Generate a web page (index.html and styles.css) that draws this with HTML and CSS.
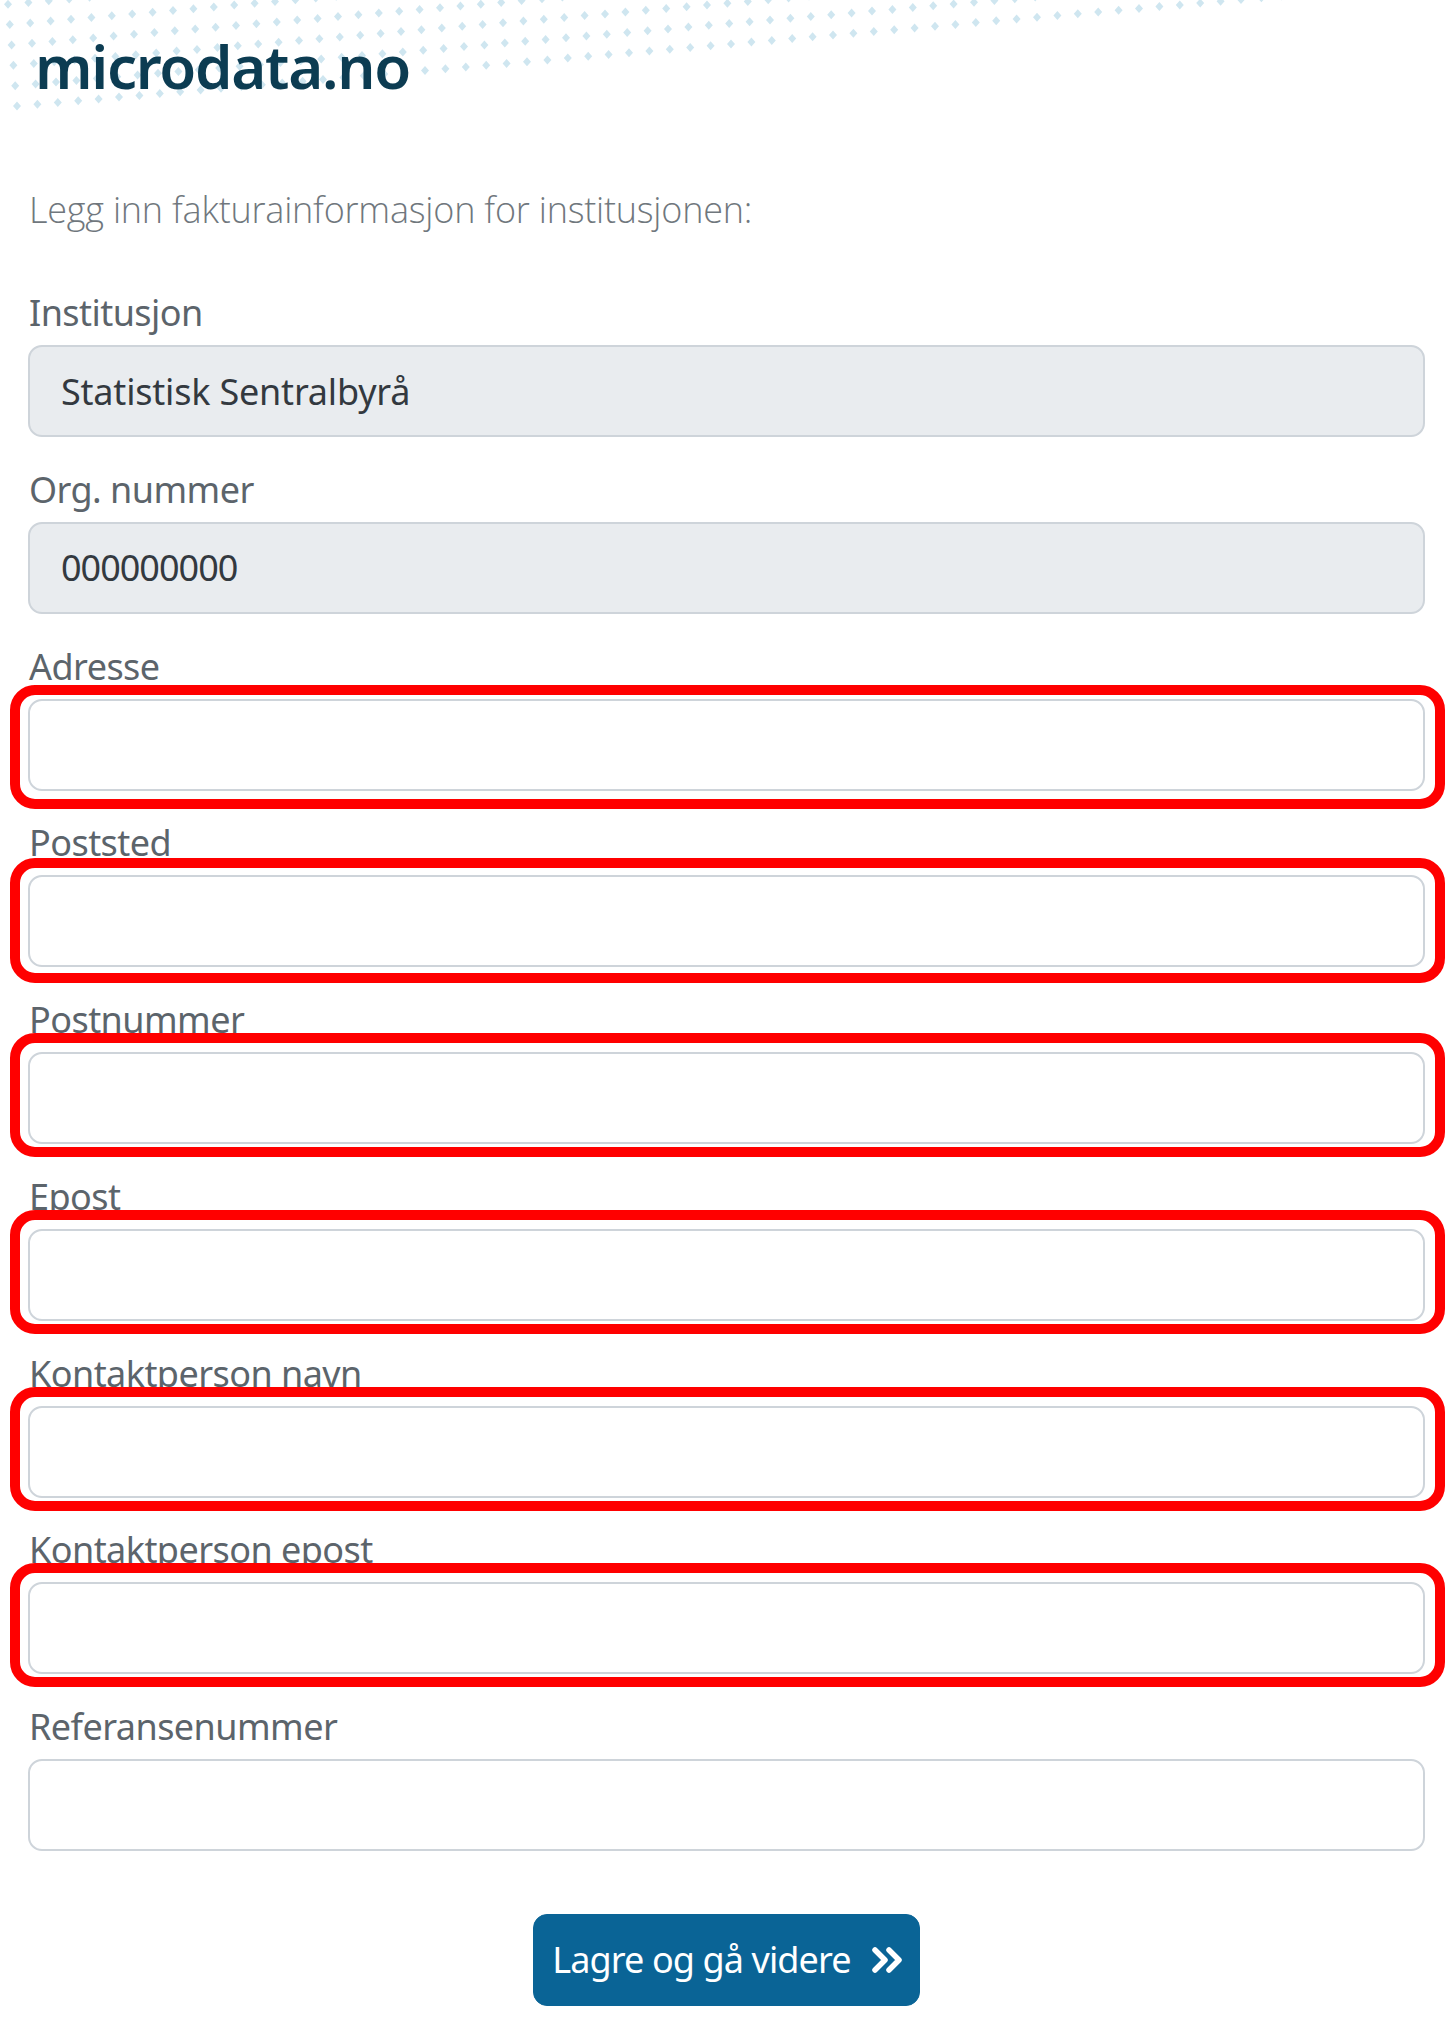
FILE: index.html
```html
<!DOCTYPE html>
<html lang="no">
<head>
    <meta charset="UTF-8">
    <meta name="viewport" content="width=device-width, initial-scale=1.0">
    <title>microdata.no</title>
    <link rel="stylesheet" href="styles.css">
</head>
<body>
    <header class="header">
        <svg class="dots" id="dots" width="1456" height="120" aria-hidden="true"></svg>
        <div class="logo">microdata.no</div>
    </header>
    <main class="container">
        <p class="intro">Legg inn fakturainformasjon for institusjonen:</p>
        <form class="invoice-form">
            <div class="form-group">
                <label for="inst">Institusjon</label>
                <input type="text" id="inst" value="Statistisk Sentralbyrå" disabled>
            </div>
            <div class="form-group">
                <label for="org">Org. nummer</label>
                <input type="text" id="org" class="input-number" value="000000000" disabled>
            </div>
            <div class="form-group">
                <label for="adresse">Adresse</label>
                <div class="input-wrap mark-first"><input type="text" id="adresse"></div>
            </div>
            <div class="form-group">
                <label for="poststed">Poststed</label>
                <div class="input-wrap mark-second"><input type="text" id="poststed"></div>
            </div>
            <div class="form-group">
                <label for="postnummer">Postnummer</label>
                <div class="input-wrap"><input type="text" id="postnummer"></div>
            </div>
            <div class="form-group">
                <label for="epost">Epost</label>
                <div class="input-wrap"><input type="text" id="epost"></div>
            </div>
            <div class="form-group">
                <label for="kontakt">Kontaktperson navn</label>
                <div class="input-wrap"><input type="text" id="kontakt"></div>
            </div>
            <div class="form-group">
                <label for="kontaktepost">Kontaktperson epost</label>
                <div class="input-wrap"><input type="text" id="kontaktepost"></div>
            </div>
            <div class="form-group">
                <label for="ref">Referansenummer</label>
                <input type="text" id="ref">
            </div>
            <button type="button" class="btn-next">
                Lagre og gå videre
                <svg width="32" height="28" viewBox="0 0 32 28" fill="none" stroke="#fff" stroke-width="5.5" stroke-linecap="round" stroke-linejoin="round"><path d="M4 4l10 10L4 24"/><path d="M18 4l10 10-10 10"/></svg>
            </button>
        </form>
    </main>
    <script src="dots.js"></script>
</body>
</html>
```

FILE: styles.css
```css
* {
    margin: 0;
    padding: 0;
    box-sizing: border-box;
}

body {
    background: #fff;
    color: #5c646b;
    font-family: 'Noto Sans', 'Open Sans', sans-serif;
    overflow: hidden;
}

.header {
    position: relative;
    height: 120px;
    padding: 28px 0 0 35px;
}

.dots {
    position: absolute;
    top: 0;
    left: 0;
}

.dots path {
    fill: #cfe6f0;
}

.logo {
    position: relative;
    color: #0c3c52;
    font-size: 60px;
    font-weight: 600;
    line-height: 76px;
    letter-spacing: -1.3px;
}

.container {
    padding: 68px 31px 0 28px;
}

.intro {
    color: #70777d;
    font-family: 'Open Sans', sans-serif;
    font-size: 36px;
    font-weight: 300;
    line-height: 44px;
    letter-spacing: -0.22px;
    margin-left: 1px;
    margin-bottom: 62px;
}

.form-group {
    height: 176.75px;
}

label {
    display: block;
    font-size: 36px;
    line-height: 38px;
    letter-spacing: -0.55px;
    height: 51px;
    margin-left: 1px;
    white-space: nowrap;
}

input {
    display: block;
    width: 100%;
    height: 92px;
    padding: 0 31px;
    background: #fff;
    border: 2px solid #ced4da;
    border-radius: 14px;
    color: #33393f;
    font-family: inherit;
    font-size: 36px;
    letter-spacing: -0.2px;
    outline: none;
}

input:disabled {
    background: #e9ecef;
}

.input-number {
    letter-spacing: -1px;
}

.input-wrap {
    position: relative;
}

/* red marking round the required fields */
.input-wrap::after {
    content: "";
    position: absolute;
    top: -19px;
    right: -20px;
    bottom: -13px;
    left: -18px;
    border: 10px solid #ff0000;
    border-radius: 25px;
    pointer-events: none;
}

.mark-first::after {
    top: -14px;
    bottom: -18px;
}

.mark-second::after {
    top: -17px;
    bottom: -16px;
}

.btn-next {
    display: flex;
    align-items: center;
    gap: 20px;
    height: 92px;
    margin: 29px auto 0;
    padding: 0 16px 0 18px;
    background: #0a6496;
    border: 1px solid #0a6496;
    border-radius: 14px;
    color: #fff;
    font-family: inherit;
    font-size: 36px;
    letter-spacing: -0.9px;
}
```

FILE: dots.js
```js
// background dots: straight rows climbing to the right, clipped by the top edge
const slope = 0.087;
let d = '';
for (let row = 0; row < 6; row++) {
    const startY = 5 + row * 20.5;
    const startX = 8 + row * 1.8;
    for (let col = 0; col < 65; col++) {
        const x = startX + col * 20.4;
        const y = startY - x * slope;
        if (y > -6) {
            d += `M${x.toFixed(1)} ${(y - 4.5).toFixed(1)}l4 4.5-4 4.5-4-4.5z`;
        }
    }
}
document.getElementById('dots').innerHTML = `<path d="${d}"/>`;
```
